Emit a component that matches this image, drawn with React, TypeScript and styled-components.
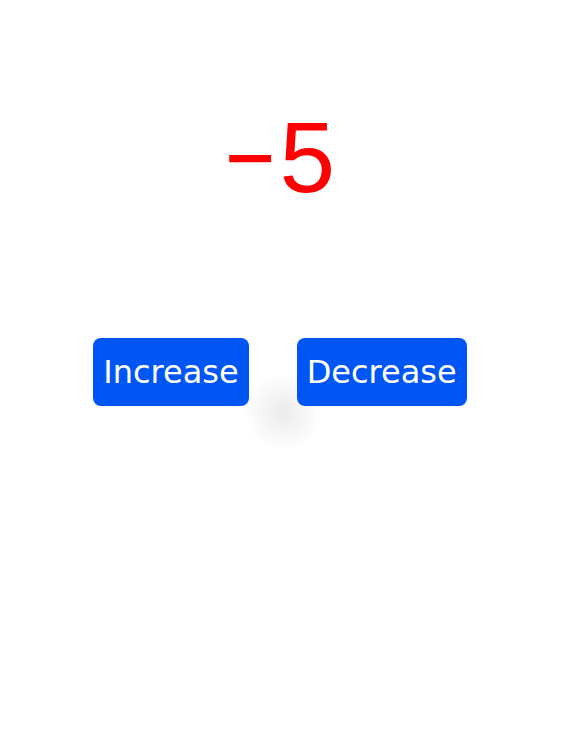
import React, {useState} from 'react';
import styled, {createGlobalStyle} from 'styled-components';

const GlobalStyle = createGlobalStyle`
  html, body {
    margin: 0;
    background: #fff;
    font-family: "DejaVu Sans", "Liberation Sans", sans-serif;
  }
`;

const Page = styled.div`
  box-sizing: border-box;
  width: 560px;
  min-height: 742px;
  display: flex;
  flex-direction: column;
  align-items: center;
  padding-top: 107px;
`;

const Count = styled.h1`
  margin: 0;
  font-family: "Liberation Sans", Arial, sans-serif;
  font-weight: 400;
  font-size: 100px;
  line-height: 1;
  color: #ff0000;
`;

const Minus = styled.span`
  display: inline-block;
  transform: scaleX(0.86);
  transform-origin: left center;
  margin-right: -4px;
`;

const Row = styled.div`
  position: relative;
  display: flex;
  gap: 48px;
  margin-top: 131px;
  &::after {
    content: '';
    position: absolute;
    left: 50%;
    top: 100%;
    width: 80px;
    height: 80px;
    margin-left: -37px;
    margin-top: -34px;
    border-radius: 50%;
    background: radial-gradient(circle, rgba(0, 0, 0, 0.08) 0%, rgba(0, 0, 0, 0.04) 35%, rgba(0, 0, 0, 0) 70%);
    z-index: 0;
    pointer-events: none;
  }
`;

const Button = styled.button`
  position: relative;
  z-index: 1;
  height: 68px;
  padding: 0 10px;
  border: none;
  border-radius: 8px;
  background: #0055f5;
  color: #fff;
  font-family: "DejaVu Sans", sans-serif;
  font-size: 32px;
  cursor: pointer;
`;

function App() {
  const [count, setCount] = useState(-5);
  return (
    <Page>
      <GlobalStyle/>
      <Count>
        {count < 0 && <Minus>{'\u2212'}</Minus>}
        {Math.abs(count)}
      </Count>
      <Row>
        <Button onClick={() => setCount(c => c + 1)}>Increase</Button>
        <Button onClick={() => setCount(c => c - 1)}>Decrease</Button>
      </Row>
    </Page>
  );
}

export default App;
